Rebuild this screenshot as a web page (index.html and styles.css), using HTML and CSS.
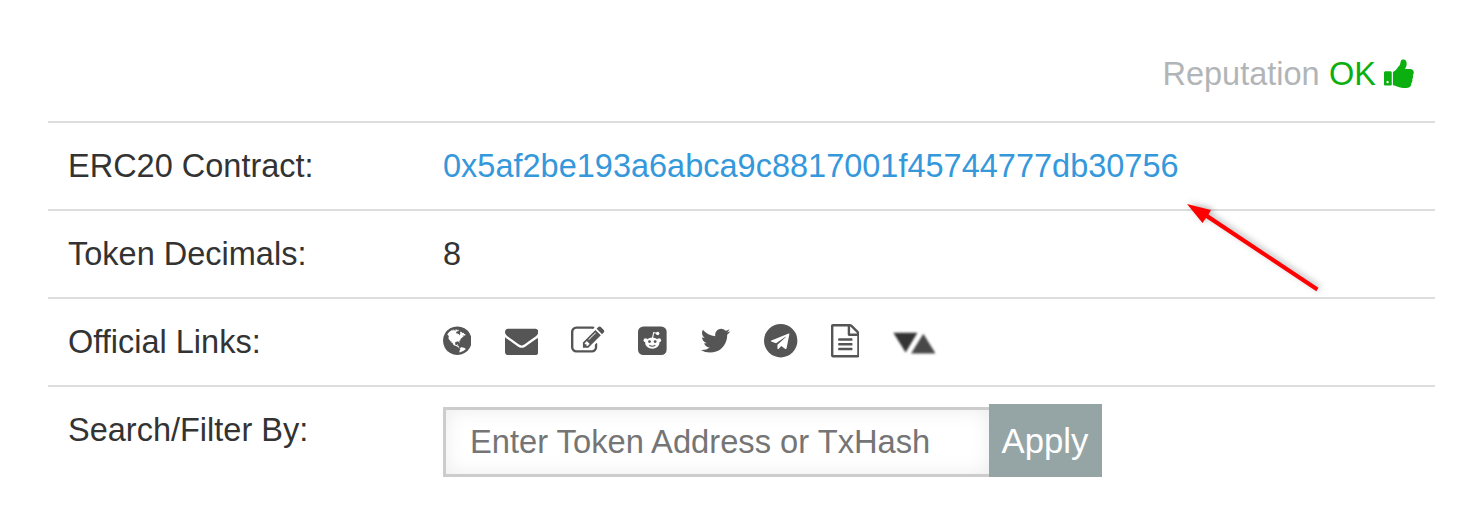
FILE: index.html
```html
<!DOCTYPE html>
<html lang="en">
<head>
<meta charset="utf-8">
<title>Token summary</title>
<link rel="stylesheet" href="styles.css">
</head>
<body>
<main class="panel">
  <div class="reputation">
    <span class="rep-label">Reputation</span>
    <span class="rep-value">OK</span>
    <svg class="thumb" viewBox="64 0 1600 1792"><path d="M320 1344q0-26-19-45t-45-19q-27 0-45.5 19t-18.5 45q0 27 18.5 45.5t45.5 18.5q26 0 45-18.5t19-45.500zm160-512v640q0 26-19 45t-45 19h-288q-26 0-45-19t-19-45v-640q0-26 19-45t45-19h288q26 0 45 19t19 45zm1184 0q0 86-55 149 15 44 15 76 3 76-43 137 17 56 0 117-15 57-54 94 9 112-49 181-64 76-197 78h-129q-66 0-144-15.500t-121.500-29-120.500-39.500q-123-43-158-44-26-1-45-19.500t-19-44.500v-641q0-25 18-43.500t43-20.500q24-2 76-59t101-121q68-87 101-120 18-18 31-48t17.500-48.500 13.500-60.500q7-39 12.500-61t19.500-52 34-50q19-19 45-19 46 0 82.500 10.500t60 26 40 40.500 24 45 12 50 5 45 .5 39q0 38-9.500 76t-19 60-27.500 56q-3 6-10 18t-11 22-8 24h277q78 0 135 57t57 135z"/></svg>
  </div>
  <div class="row">
    <div class="label">ERC20 Contract:</div>
    <a class="address">0x5af2be193a6abca9c8817001f45744777db30756</a>
  </div>
  <div class="row">
    <div class="label">Token Decimals:</div>
    <div>8</div>
  </div>
  <div class="row">
    <div class="label">Official Links:</div>
    <div class="links">
      <svg class="w-square" viewBox="128 0 1536 1792"><path d="M896 128q209 0 385.5 103t279.5 279.5 103 385.5-103 385.5-279.5 279.5-385.5 103-385.5-103-279.5-279.5-103-385.5 103-385.5 279.5-279.5 385.5-103zm274 521q-2 1-9.5 9.5t-13.5 9.5q2 0 4.5-5t5-11 3.5-7q6-7 22-15 14-6 52-12 34-8 51 11-2-2 9.5-13t14.5-12q3-2 15-4.5t15-7.5l2-22q-12 1-17.5-7t-6.5-21q0 2-6 8 0-7-4.5-8t-11.5 1-9 1q-10-3-15-7.5t-8-16.5-4-15q-2-5-9.5-11t-9.5-10q-1-2-2.5-5.5t-3-6.5-4-5.5-5.5-2.5-7 5-7.5 10-4.5 5q-3-2-6-1.5t-4.5 1-4.5 3-5 3.5q-3 2-8.5 3t-8.5 2q15-5-1-11-10-4-16-3 9-4 7.5-12t-8.5-14h5q-1-4-8.5-8.5t-17.5-8.5-13-6q-8-5-34-9.5t-33-.5q-5 6-4.5 10.5t4 14 3.5 12.5q1 6-5.5 13t-6.5 12q0 7 14 15.5t10 21.5q-3 8-16 16t-16 12q-5 8-1.5 18.5t10.5 16.5q2 2 1.5 4t-3.5 4.5-5.5 4-6.5 3.5l-3 2q-11 5-20.5-6t-13.5-26q-7-25-16-30-23-8-29 1-5-13-41-26-25-9-58-4 6-1 0-15-7-15-19-12 3-6 4-17.5t1-13.5q3-13 12-23 1-1 7-8.5t9.5-13.5.5-6q35 4 50-11 5-5 11.5-17t10.5-17q9-6 14-5.5t14.5 5.5 14.5 5q14 1 15.5-11t-7.5-20q12 1 3-17-4-7-8-9-12-4-27 5-8 4 2 8-1-1-9.5 10.5t-16.5 17.5-16-5q-1-1-5.5-13.5t-9.5-13.5q-8 0-16 15 3-8-11-15t-24-8q19-12-8-27-7-4-20.5-5t-19.5 4q-5 7-5.5 11.5t5 8 10.5 5.5 11.5 4 8.5 3q14 10 8 14-2 1-8.5 3.5t-11.5 4.5-6 4q-3 4 0 14t-2 14q-5-5-9-17.5t-7-16.5q7 9-25 6l-10-1q-4 0-16 2t-20.5 1-13.5-8q-4-8 0-20 1-4 4-2-4-3-11-9.5t-10-8.5q-46 15-94 41 6 1 12-1 5-2 13-6.5t10-5.5q34-14 42-7l5-5q14 16 20 25-7-4-30-1-20 6-22 12 7 12 5 18-4-3-11.5-10t-14.5-11-15-5q-16 0-22 1-146 80-235 222 7 7 12 8 4 1 5 9t2.5 11 11.5-3q9 8 3 19 1-1 44 27 19 17 21 21 3 11-10 18-1-2-9-9t-9-4q-3 5 .5 18.5t10.5 12.5q-7 0-9.5 16t-2.5 35.5-1 23.5l2 1q-3 12 5.5 34.5t21.5 19.5q-13 3 20 43 6 8 8 9 3 2 12 7.5t15 10 10 10.5q4 5 10 22.5t14 23.5q-2 6 9.5 20t10.5 23q-1 0-2.5 1t-2.5 1q3 7 15.5 14t15.5 13q1 3 2 10t3 11 8 2q2-20-24-62-15-25-17-29-3-5-5.5-15.5t-4.5-14.5q2 0 6 1.5t8.5 3.5 7.5 4 2 3q-3 7 2 17.5t12 18.5 17 19 12 13q6 6 14 19.5t0 13.5q9 0 20 10.5t17 19.5q5 8 8 26t5 24q2 7 8.5 13.5t12.5 9.5l16 8 13 7q5 2 18.5 10.5t21.5 11.5q10 4 16 4t14.5-2.5 13.5-3.5q15-2 29 15t21 21q36 19 55 11-2 1 .5 7.5t8 15.5 9 14.5 5.5 8.5q5 6 18 15t18 15q6-4 7-9-3 8 7 20t18 10q14-3 14-32-31 15-49-18 0-1-2.5-5.5t-4-8.5-2.5-8.5 0-7.5 5-3q9 0 10-3.5t-2-12.5-4-13q-1-8-11-20t-12-15q-5 9-16 8t-16-9q0 1-1.5 5.5t-1.5 6.5q-13 0-15-1 1-3 2.5-17.5t3.5-22.5q1-4 5.5-12t7.5-14.5 4-12.5-4.5-9.5-17.5-2.5q-19 1-26 20-1 3-3 10.5t-5 11.5-9 7q-7 3-24 2t-24-5q-13-8-22.5-29t-9.5-37q0-10 2.5-26.5t3-25-5.5-24.5q3-2 9-9.5t10-10.5q2-1 4.5-1.5t4.5 0 4-1.5 3-6q-1-1-4-3-3-3-4-3 7 3 28.5-1.5t27.5 1.5q15 11 22-2 0-1-2.5-9.5t-.5-13.5q5 27 29 9 3 3 15.5 5t17.5 5q3 2 7 5.5t5.5 4.5 5-.5 8.5-6.5q10 14 12 24 11 40 19 44 7 3 11 2t4.5-9.5 0-14-1.5-12.5l-1-8v-18l-1-8q-15-3-18.5-12t1.5-18.5 15-18.5q1-1 8-3.5t15.5-6.5 12.5-8q21-19 15-35 7 0 11-9-1 0-5-3t-7.5-5-4.5-2q9-5 2-16 5-3 7.5-11t7.5-10q9 12 21 2 7-8 1-16 5-7 20.5-10.5t18.5-9.5q7 2 8-2t1-12 3-12q4-5 15-9t13-5l17-11q3-4 0-4 18 2 31-11 10-11-6-20 3-6-3-9.5t-15-5.5q3-1 11.5-.5t10.5-1.5q15-10-7-16-17-5-43 12zm-163 877q206-36 351-189-3-3-12.5-4.5t-12.5-3.5q-18-7-24-8 1-7-2.5-13t-8-9-12.5-8-11-7q-2-2-7-6t-7-5.5-7.5-4.5-8.5-2-10 1l-3 1q-3 1-5.5 2.5t-5.5 3-4 3 0 2.5q-21-17-36-22-5-1-11-5.5t-10.5-7-10-1.5-11.5 7q-5 5-6 15t-2 13q-7-5 0-17.5t2-18.5q-3-6-10.5-4.5t-12 4.5-11.5 8.5-9 6.5-8.5 5.5-8.5 7.5q-3 4-6 12t-5 11q-2-4-11.5-6.5t-9.5-5.5q2 10 4 35t5 38q7 31-12 48-27 25-29 40-4 22 12 26 0 7-8 20.5t-7 21.5q0 6 2 16z"/></svg>
      <svg class="w-full" viewBox="0 0 1792 1792"><path d="M1792 710v794q0 66-47 113t-113 47h-1472q-66 0-113-47t-47-113v-794q44 49 101 87 362 246 497 345 57 42 92.500 65.500t94.500 48 110 24.500h2q51 0 110-24.500t94.500-48 92.500-65.500q170-123 498-345 57-39 100-87zm0-294q0 79-49 151t-122 123q-376 261-468 325-10 7-42.500 31t-54 38.500-52 32.500-57.500 27-50 9h-2q-23 0-50-9t-57.500-27-52-32.500-54-38.500-42.500-31q-91-64-262-182.500t-205-142.500q-62-42-117-115.500t-55-136.500q0-78 41.500-130t118.500-52h1472q65 0 112.500 47t47.500 113z"/></svg>
      <svg class="w-full" viewBox="0 0 1792 1792"><path d="M888 1184l116-116-152-152-116 116v56h96v96h56zm440-720q-16-16-33 1l-350 350q-17 17-1 33t33-1l350-350q17-17 1-33zm80 594v190q0 119-84.500 203.500t-203.500 84.500h-832q-119 0-203.500-84.500t-84.500-203.500v-832q0-119 84.500-203.500t203.500-84.500h832q63 0 117 25 15 7 18 23 3 17-9 29l-49 49q-14 14-32 8-23-6-45-6h-832q-66 0-113 47t-47 113v832q0 66 47 113t113 47h832q66 0 113-47t47-113v-126q0-13 9-22l64-64q15-15 35-7t20 29zm-96-738l288 288-672 672h-288v-288zm444 132l-92 92-288-288 92-92q28-28 68-28t68 28l152 152q28 28 28 68t-28 68z"/></svg>
      <svg class="w-square" viewBox="128 0 1536 1792">
        <rect x="128" y="128" width="1536" height="1536" rx="288"/>
        <g class="cut">
          <ellipse cx="896" cy="1025" rx="385" ry="300"/>
          <circle cx="535" cy="870" r="110"/><circle cx="1257" cy="870" r="110"/>
          <circle cx="1185" cy="510" r="92"/>
        </g>
        <path class="cut-line" d="M905 760l65-300 190 42" stroke-width="60"/>
        <circle cx="745" cy="945" r="78"/><circle cx="1047" cy="945" r="78"/>
        <path class="smile" d="M735 1140q161 100 322 0" stroke-width="55"/>
      </svg>
      <svg class="w-bird" viewBox="64 0 1664 1792"><path d="M1684 408q-67 98-162 167 1 14 1 42 0 130-38 259.500t-115.500 248.500-184.500 210.500-258 146-323 54.500q-271 0-496-145 35 4 78 4 225 0 401-138-105-2-188-64.500t-114-159.500q33 5 61 5 43 0 85-11-112-23-185.500-111.500t-73.500-205.500v-4q68 38 146 41-66-44-105-115t-39-154q0-88 44-163 121 149 294.500 238.500t371.500 99.500q-8-38-8-74 0-134 94.500-228.500t228.500-94.500q140 0 236 102 109-21 205-78-37 115-142 178 93-10 186-50z"/></svg>
      <svg class="w-full" viewBox="0 0 1792 1792">
        <circle cx="896" cy="896" r="896"/>
        <path class="cut" d="M1325 513q45-15 36 35l-150 755q-15 62-66 36l-222-152-128 136q-30 27-73 0v-205l455-424q10-14-20-6L645 1032 385 940q-48-22 10-50z"/>
      </svg>
      <svg class="w-square" viewBox="128 0 1536 1792"><path d="M1596 380q28 28 48 76t20 88v1152q0 40-28 68t-68 28h-1344q-40 0-68-28t-28-68v-1600q0-40 28-68t68-28h896q40 0 88 20t76 48zm-444-244v376h376q-10-29-22-41l-313-313q-12-12-41-22zm384 1528v-1024h-416q-40 0-68-28t-28-68v-416h-768v1536h1280zm-1024-864q0-14 9-23t23-9h704q14 0 23 9t9 23v64q0 14-9 23t-23 9h-704q-14 0-23-9t-9-23v-64zm736 224q14 0 23 9t9 23v64q0 14-9 23t-23 9h-704q-14 0-23-9t-9-23v-64q0-14 9-23t23-9h704zm0 256q14 0 23 9t9 23v64q0 14-9 23t-23 9h-704q-14 0-23-9t-9-23v-64q0-14 9-23t23-9h704z"/></svg>
      <svg class="triangles" viewBox="0 0 42 34"><path class="tri-down" d="M0 9H24.500L12.500 29z"/><path class="tri-up" d="M18 30L30.500 10 43 30z"/></svg>
    </div>
  </div>
  <div class="row">
    <div class="label">Search/Filter By:</div>
    <div class="search">
      <input class="field" type="text" placeholder="Enter Token Address or TxHash">
      <button class="apply" type="button">Apply</button>
    </div>
  </div>
</main>
<svg class="arrow" viewBox="1177 194 160 110"><path d="M1187 204L1211 210 1208.500 214.500 1318.500 287.800 1316.300 291.200 1206 218 1202.500 223z"/></svg>
</body>
</html>
```
FILE: styles.css
```css
body {
  margin: 0;
  min-height: 521px;
  background: #fff;
  color: #333;
  font: 32.5px/46px "Liberation Sans", Arial, sans-serif;
}
.panel {
  width: 1387px;
  margin-left: 48px;
}
.reputation {
  box-sizing: border-box;
  height: 121px;
  padding: 51px 21.3px 0 0;
  display: flex;
  justify-content: flex-end;
}
.rep-label { color: #b2b5b7; margin-right: 9.3px; }
.rep-value { color: #0caf10; margin-right: 8px; }
.thumb {
  width: 29.8px;
  height: 33.4px;
  margin-top: 5.5px;
  fill: #0caf10;
}
.row {
  box-sizing: border-box;
  height: 88px;
  padding: 20px 20px 0;
  border-top: 2px solid #ddd;
  display: grid;
  grid-template-columns: 375px 1fr;
}
.address { color: #3498db; }
.links {
  display: flex;
  gap: 33.3px;
  margin-left: -0.4px;
  padding-top: 5.4px;
  fill: #555;
}
.links svg { height: 33.4px; flex: none; }
.w-square { width: 28.65px; }
.w-full { width: 33.4px; }
.w-bird { width: 31px; }
.triangles { width: 42px; filter: blur(0.9px); }
.tri-down { fill: #333; }
.tri-up { fill: #484848; }
.cut { fill: #fff; }
.cut-line { fill: none; stroke: #fff; }
.smile { fill: none; stroke: #555; }
.search {
  display: flex;
  align-items: flex-end;
  height: 73px;
  margin-top: -3px;
}
.field {
  box-sizing: border-box;
  width: 546px;
  height: 70px;
  padding: 0 24px;
  border: 3px solid #ccc;
  border-right: 0;
  box-shadow: inset 0 0 20px rgba(0, 0, 0, 0.08);
  font: inherit;
  font-size: 32.7px;
  outline: 0;
}
.field::placeholder { color: #757575; }
.apply {
  width: 113px;
  height: 73px;
  padding: 0 1px 0 0;
  border: 0;
  background: #95a5a6;
  color: #fff;
  font: inherit;
  font-size: 34.7px;
}
.arrow {
  position: absolute;
  left: 1177px;
  top: 194px;
  width: 160px;
  height: 110px;
  fill: #f00;
  filter: drop-shadow(2px -1px 3px rgba(0, 0, 0, 0.3));
}
```
